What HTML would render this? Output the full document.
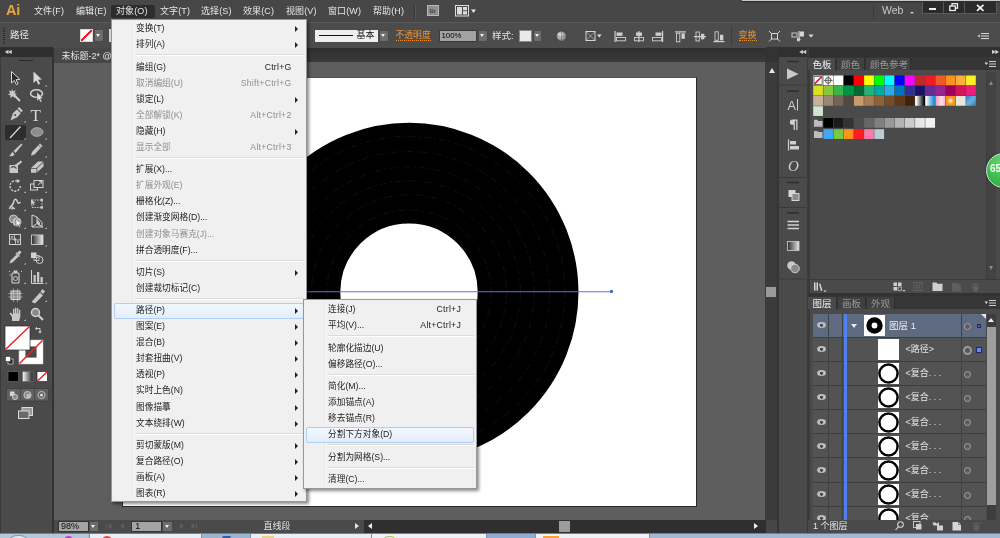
<!DOCTYPE html>
<html lang="zh-CN">
<head>
<meta charset="utf-8">
<title>Adobe Illustrator</title>
<style>
*{box-sizing:border-box;margin:0;padding:0}
html,body{width:1000px;height:538px;overflow:hidden;background:#4a4a4a}
body{font-family:"Liberation Sans","Noto Sans CJK SC",sans-serif;font-size:9px;color:#dcdcdc;line-height:1}
#app{position:absolute;left:0;top:0;width:1000px;height:538px;overflow:hidden;background:#4a4a4a;filter:blur(0.4px)}
.abs,#app div,#app span,#app svg,#app i{position:absolute;display:block}
#app span.t{white-space:nowrap}
/* menubar */
#menubar{left:0;top:0;width:1000px;height:22px;background:#474747}
#menubar .mi{top:6.500px;font-size:9px;color:#e6e6e6;white-space:nowrap;letter-spacing:0.1px}
#ctrl{left:0;top:22px;width:1000px;height:26px;background:#4c4c4c;border-top:1px solid #5a5a5a}
/* menus */
.menu{background:#f0f0f0;border:1px solid #979797;box-shadow:2px 2px 3px rgba(0,0,0,.45)}
.menu .it{left:0;width:100%;height:16px;font-size:8.7px;color:#1c1c1c}
.menu .it .l{left:24px;top:3px;white-space:nowrap}
.menu .it .r{right:14.500px;top:3px;white-space:nowrap;letter-spacing:0.250px}
.menu .it.dis{color:#8e8e8e}
.menu .it .ar{right:8px;top:5px;width:0;height:0;border-left:3px solid #222;border-top:3px solid transparent;border-bottom:3px solid transparent}
.menu .sep{left:24px;right:2px;height:1px;background:#dcdcdc;border-bottom:1px solid #fff;height:2px}
.menu .gut{left:20px;top:1px;bottom:1px;background:#e8e8e8;border-right:1px solid #f8f8f8;width:2px}
.menu .hl{left:2px;right:2px;height:16px;border:1px solid #aecff7;border-radius:2px;background:linear-gradient(#f2f7fd,#e3eefb)}

.ptab{top:1px;height:12px;background:#404040;border-right:1px solid #2e2e2e}
.ptab.act{background:#4a4a4a;height:13px}
.ptab .t{left:4.5px;top:2px;font-size:9.5px;color:#999}
.ptab.act .t{color:#f0f0f0}
.lrow{left:0;width:173px;height:24.15px;border-bottom:1px solid #3e3e3e;font-size:9.5px;color:#e6e6e6}
.lrow.sel{background:#5d6a80}
.lrow .th{top:1.5px;width:21px;height:21px;background:#fff}
.lrow .eye{left:3.500px;top:8.500px;width:9px;height:6px;border-radius:50%;background:radial-gradient(circle at 50% 55%,#484848 0 1.200px,#bcbcbc 1.700px)}
.lrow .tri{left:37.500px;top:10.5px;border-left:3px solid transparent;border-right:3px solid transparent;border-top:4.5px solid #ececec}
.lrow .tg{left:151px;top:9px;width:7px;height:7px;border:1.300px solid #a4a4a4;border-radius:50%;background:#5c5c5c}
.lrow .tg.on{left:150px;top:8px;width:9px;height:9px;border:2.5px solid #9a9a9a;background:#555}
.lrow .sq{left:163px;top:9.5px;width:5.5px;height:5.5px;background:#5b8eff;border:1px solid #1c2a60}
.lrow.sel .sq{left:163.500px;top:10px;width:4.800px;height:4.800px;background:#3d63d6}
.lrow .cn{right:0;top:0;border-left:5px solid transparent;border-top:5px solid #e8e8e8}

.dd{width:9.5px;height:12.5px;background:#6c6c6c;border:1px solid #484848;border-radius:1px}
.dd::after{content:"";position:absolute;left:calc(50% - 2.5px);top:calc(50% - 1.5px);border-left:2.500px solid transparent;border-right:2.500px solid transparent;border-top:3px solid #f0f0f0}
</style>
</head>
<body>
<div id="app">

<!-- ============ DOCUMENT AREA ============ -->
<div id="docarea" style="left:52px;top:47px;width:730px;height:486px;background:#5e5e5e">
  <div style="left:0;top:0;width:730px;height:15px;background:linear-gradient(#2e2e2e,#3a3a3a)"></div>
  <div id="tab" style="left:2px;top:0.500px;width:120px;height:15px;background:#474747"><span class="t" style="left:7.500px;top:4.500px;font-size:9px;color:#e4e4e4">未标题-2* @ 98% (RGB/预览)</span></div>
  <div style="left:0;top:0;width:2px;height:486px;background:#333"></div>
</div>
<!-- artboard -->
<div id="artboard" style="left:122px;top:76.800px;width:575px;height:430.700px;background:#fff;border:1px solid #2a2a2a;border-top-color:#555"></div>
<svg id="art" style="left:122px;top:77px" width="575" height="431" viewBox="122 77 575 431">
  <circle cx="409" cy="292.2" r="119.075" fill="none" stroke="#000" stroke-width="100.75"/>
  <g fill="none" stroke="#1b1b1b" stroke-width="0.6" stroke-dasharray="7 3 2 3"><circle cx="409" cy="292.2" r="156"/><circle cx="409" cy="292.2" r="140.700"/><circle cx="409" cy="292.2" r="125.300"/><circle cx="409" cy="292.2" r="111.400"/><circle cx="409" cy="292.2" r="97.500"/><circle cx="409" cy="292.2" r="82.200"/></g>
  <path d="M300 291.750H611" stroke="#557ad0" stroke-width="1"/>
</svg>

<div style="left:609.800px;top:290px;width:3.400px;height:3.400px;background:#3f62c8;border-radius:1px"></div>

<!-- ============ MENUBAR ============ -->
<div id="menubar">
  <span class="t" style="left:6px;top:3px;font-size:14.500px;font-weight:bold;color:#e8a53c;letter-spacing:-0.300px">Ai</span>
  <div style="left:110.500px;top:4.800px;width:44px;height:13.500px;background:#2d2d2d;border-radius:2px"></div>
  <span class="mi" style="left:34px">文件(F)</span>
  <span class="mi" style="left:76px">编辑(E)</span>
  <span class="mi" style="left:116px">对象(O)</span>
  <span class="mi" style="left:160px">文字(T)</span>
  <span class="mi" style="left:201px">选择(S)</span>
  <span class="mi" style="left:243px">效果(C)</span>
  <span class="mi" style="left:286px">视图(V)</span>
  <span class="mi" style="left:328px">窗口(W)</span>
  <span class="mi" style="left:373px">帮助(H)</span>
  <div style="left:414px;top:4px;width:1px;height:15px;background:#3a3a3a;border-right:1px solid #555;width:2px"></div>
  <div style="left:427px;top:5px;width:12px;height:11px;background:#8f8f8f;border:1px solid #b8b8b8"><span class="t" style="left:1.5px;top:2px;font-size:6px;font-weight:bold;color:#4a4a4a">Br</span></div>
  <svg style="left:455px;top:5px" width="24" height="12" viewBox="0 0 24 12"><rect x="0.5" y="0.5" width="13" height="10.500" fill="none" stroke="#dcdcdc"/><rect x="2" y="2" width="5" height="7.500" fill="#dcdcdc"/><rect x="8" y="2" width="4" height="3.300" fill="#dcdcdc"/><rect x="8" y="6.200" width="4" height="3.300" fill="#dcdcdc"/><path d="M16 4.500h5l-2.500 3.500z" fill="#e6e6e6"/></svg>
  <!-- top-right strip from another window -->
  <div style="left:742px;top:-0.500px;width:258px;height:1.500px;background:#c8c8c8;box-shadow:0 1px 1.500px rgba(0,0,0,.5)"></div>
  <div style="left:873px;top:5px;width:1px;height:15px;background:#3c3c3c"></div>
  <span class="t" style="left:882px;top:5px;font-size:10.500px;color:#c6c6c6">Web</span>
  <i style="left:909.500px;top:12px;border-left:2px solid transparent;border-right:2px solid transparent;border-top:2.500px solid #d0d0d0"></i>
  <div style="left:922px;top:1.500px;width:75px;height:12px;background:#2b2b2b;border:1px solid #5c5c5c;border-top:none;border-radius:0 0 2px 2px"></div>
  <div style="left:943px;top:1.500px;width:1px;height:11.500px;background:#555"></div>
  <div style="left:964px;top:1.500px;width:1px;height:11.500px;background:#555"></div>
  <div style="left:929px;top:8px;width:7px;height:2px;background:#f0f0f0"></div>
  <svg style="left:949px;top:3px" width="10" height="9" viewBox="0 0 10 9"><rect x="3" y="0.700" width="5.500" height="4.500" fill="none" stroke="#f0f0f0" stroke-width="1.300"/><rect x="0.800" y="3" width="5.500" height="4.500" fill="#2b2b2b" stroke="#f0f0f0" stroke-width="1.300"/></svg>
  <svg style="left:976px;top:3.500px" width="9" height="8" viewBox="0 0 9 8"><path d="M1 0.800l6.500 6M7.500 0.800l-6.500 6" stroke="#f4f4f4" stroke-width="1.700"/></svg>
</div>

<!-- ============ CONTROL BAR ============ -->
<div id="ctrl">
  <div style="left:3px;top:4px;width:2px;height:17px;background:repeating-linear-gradient(#2e2e2e 0 1px,#4c4c4c 1px 2px)"></div>
  <span class="t" style="left:10px;top:7px;font-size:9.500px;color:#e6e6e6">路径</span>
  <div style="left:80px;top:6px;width:12.500px;height:13px;background:linear-gradient(135deg,#fff 44%,#e8202a 45%,#e8202a 56%,#fff 57%);border:1px solid #d8d8d8"></div>
  <div class="dd" style="left:94px;top:6px"></div>
  <div style="left:109.300px;top:6px;width:3px;height:13px;background:#d8d8d8"></div>
  <!-- stroke style -->
  <div style="left:314.500px;top:6.500px;width:63.500px;height:12px;background:#efefef"><div style="left:4px;top:5.200px;width:34px;height:1.700px;background:#111"></div><span class="t" style="left:42px;top:1.500px;font-size:9px;color:#111">基本</span></div>
  <div class="dd" style="left:379px;top:6.500px"></div>
  <span class="t" style="left:395.500px;top:7.500px;font-size:8.800px;color:#f09432;border-bottom:1px dotted #f09432;padding-bottom:0.500px">不透明度</span>
  <div style="left:438.500px;top:6.500px;width:38.500px;height:12px;background:#a2a2a2;border:1px solid #3a3a3a"><span class="t" style="left:2px;top:1.500px;font-size:7.800px;color:#000">100%</span></div>
  <div class="dd" style="left:478px;top:6.500px"></div>
  <span class="t" style="left:492px;top:7.500px;font-size:9.500px;color:#e2e2e2">样式:</span>
  <div style="left:518.500px;top:6.500px;width:13px;height:12px;background:#e9e9e9;border:1px solid #8a8a8a"></div>
  <div class="dd" style="left:532.500px;top:6.500px"></div>
  <svg id="cicons" style="left:550px;top:0" width="450" height="25" viewBox="550 22 450 25">
    <defs><radialGradient id="gl" cx="0.4" cy="0.4"><stop offset="0" stop-color="#f4f4f4"/><stop offset="1" stop-color="#7c7c7c"/></radialGradient></defs>
    <circle cx="561.500" cy="35.200" r="5.300" fill="url(#gl)" stroke="#3a3a3a" stroke-width="0.800"/><path d="M561.500 30v10.500M556.300 35.200h10.400" stroke="#6a6a6a" stroke-width="0.500"/>
    <g fill="none" stroke="#d4d4d4" stroke-width="1"><rect x="586" y="30.500" width="9" height="9"/><path d="M586 30.500l9 9M595 30.500l-9 9" stroke-width="0.600"/></g><path d="M597 33.500h4.500l-2.250 3z" fill="#e0e0e0"/>
    <g fill="#cfcfcf" stroke="none">
      <rect x="614.500" y="30" width="1.200" height="11"/><rect x="616.500" y="31.500" width="6" height="3.300"/><rect x="616.500" y="36.500" width="9" height="3.300" fill="none" stroke="#cfcfcf" stroke-width="0.900"/>
      <rect x="638.300" y="30" width="1.200" height="11"/><rect x="636" y="31.500" width="6" height="3.300"/><rect x="634.500" y="36.500" width="9" height="3.300" fill="none" stroke="#cfcfcf" stroke-width="0.900"/>
      <rect x="662" y="30" width="1.200" height="11"/><rect x="655.500" y="31.500" width="6" height="3.300"/><rect x="652.500" y="36.500" width="9" height="3.300" fill="none" stroke="#cfcfcf" stroke-width="0.900"/>
      <rect x="675" y="30.300" width="11" height="1.200"/><rect x="676.500" y="32.300" width="3.300" height="8.500" fill="none" stroke="#cfcfcf" stroke-width="0.900"/><rect x="681.500" y="32.300" width="3.300" height="5.500"/>
      <rect x="694" y="35" width="12" height="1.200"/><rect x="696" y="31" width="3.300" height="9" fill="none" stroke="#cfcfcf" stroke-width="0.900"/><rect x="701" y="32.800" width="3.300" height="5.500"/>
      <rect x="713.500" y="40" width="11" height="1.200"/><rect x="715" y="30.800" width="3.300" height="8.500" fill="none" stroke="#cfcfcf" stroke-width="0.900"/><rect x="720" y="33.800" width="3.300" height="5.500"/>
    </g>
    <path d="M731.500 25v20" stroke="#3e3e3e" stroke-width="1"/>
    <g fill="none" stroke="#d6d6d6" stroke-width="1"><rect x="771.500" y="32.500" width="6" height="5.500"/><path d="M769 30l2.500 2.500M780 30l-2.500 2.500M769 40.500l2.500-2.500M780 40.500l-2.500-2.500"/></g>
    <g fill="#d6d6d6"><rect x="792" y="32" width="5" height="4" fill="none" stroke="#d6d6d6" stroke-width="0.900"/><rect x="798.500" y="30" width="1.200" height="10.500"/><path d="M800 30.500h4v5h-4zM797 36.500l4 2-4 2z"/><path d="M808.500 33.500h5l-2.500 3.300z"/></g>
    <g fill="#cfcfcf"><path d="M977.500 35l2.300-1.800v3.600z"/><rect x="981" y="32" width="8" height="1.100"/><rect x="981" y="34.500" width="8" height="1.100"/><rect x="981" y="37" width="8" height="1.100"/></g>
  </svg>
  <span class="t" style="left:738.500px;top:7.500px;font-size:9px;color:#f09432;border-bottom:1px dotted #f09432;padding-bottom:0.500px">变换</span>
</div>

<!-- ============ TOOLS PANEL ============ -->
<div id="tools" style="left:0;top:47px;width:52px;height:486px;background:#4a4a4a;border-left:1px solid #3a3a3a">
  <div style="left:-1px;top:0;width:53px;height:10px;background:#2f2f2f"></div>
  <span class="t" style="left:3.500px;top:2.500px;font-size:4.500px;color:#cfcfcf;letter-spacing:-1.200px">◀◀</span>
  <div style="left:18px;top:12.500px;width:14px;height:1.600px;background:#2c2c2c"></div>
  <div style="left:4px;top:77.500px;width:21px;height:15.500px;background:#2d2d2d;border-radius:1px"></div>
</div>
<svg id="toolicons" style="left:0;top:57px" width="52" height="380" viewBox="0 57 52 380">
  <g fill="#c8c8c8" stroke="none">
    <!-- row1 selection / direct -->
    <path d="M11.500 71.500l0 11.500 2.800-2.600 2 4.300 1.800-0.900-2-4.100 3.700-0.300z" fill="#2a2a2a" stroke="#d8d8d8" stroke-width="1"/>
    <path d="M33.500 71.500l0 11.500 2.800-2.600 2 4.300 1.800-0.900-2-4.100 3.700-0.300z" fill="#d8d8d8"/>
    <!-- row2 wand / lasso -->
    <path d="M13.500 94.500l6.500 6.500" stroke="#d2d2d2" stroke-width="1.800"/><path d="M12 88.500l1 2.800 2.800-1-1.300 2.600 2.600 1.400-2.800 0.800 0.500 3-2.300-1.800-2.200 2 0.300-3-2.900-0.500 2.500-1.600-1.400-2.600 2.900 0.700z"/>
    <ellipse cx="36.500" cy="93.500" rx="6" ry="3.800" fill="none" stroke="#d2d2d2" stroke-width="1.500"/><path d="M37 92l0 9 2-1.800 1.500 3 1.400-0.700-1.500-2.900 2.600-0.200z" fill="#e0e0e0" stroke="#4a4a4a" stroke-width="0.400"/>
    <!-- row3 pen / type -->
    <path d="M10.500 120.500l2.500-7.500 4-3.500 3.800 3.800-3.600 3.900z M17.500 108.500l1.700-1.600 3.700 3.800-1.600 1.600z"/><circle cx="15.200" cy="115" r="1.100" fill="#4a4a4a"/>
    <text x="30.500" y="120.500" font-family="Liberation Serif,serif" font-size="17" fill="#d6d6d6">T</text>
    <!-- row4 line / ellipse -->
    <path d="M10 138l10.500-11.500" stroke="#dadada" stroke-width="1.200"/>
    <ellipse cx="37" cy="132" rx="6" ry="4.300" fill="#8c8c8c" stroke="#bcbcbc" stroke-width="0.800"/>
    <!-- row5 brush / pencil -->
    <path d="M21.500 143.500l1 1-7 8.500-2-2z M12.500 152l2.200 2.200c-1.500 2.300-4 2.500-5.700 1.800 1.800-0.600 1.700-2.800 3.500-4z"/>
    <path d="M40 143.500l2.500 2.500-8 8.500-3.500 1.200 1-3.700z" /><path d="M38.500 145l2.500 2.500" stroke="#4a4a4a" stroke-width="0.700"/>
    <!-- row6 blob / eraser -->
    <path d="M9.500 165h8.500v8h-8.500z M14 165.500l7-5 1.200 1.500-6.500 5.500z"/><path d="M11 167.500c2-1.500 4-1 5.500 1" stroke="#4a4a4a" stroke-width="1.200" fill="none"/>
    <path d="M31 168l7-6.500 5.500 0-7 6.500z M31 168.700h5.500v4h-5.500z M37.300 168.300l6.200-5.800v4l-6.200 5.800z"/>
    <!-- row7 rotate / scale -->
    <path d="M20.300 186a5.200 5.200 0 1 1-2.500-4.400" fill="none" stroke="#d2d2d2" stroke-width="1.300" stroke-dasharray="2.200 1.200"/><path d="M16.500 179l3.800 1.800-3 2.500z"/>
    <rect x="30.500" y="184" width="7" height="6" fill="none" stroke="#d2d2d2" stroke-width="1"/><rect x="34" y="180.500" width="9" height="7" fill="#4a4a4a" stroke="#d2d2d2" stroke-width="1"/><path d="M38 185l3.500-3.200M41.700 181.500v2.500M41.700 181.500h-2.500" stroke="#d2d2d2" stroke-width="0.900" fill="none"/>
    <!-- row8 width / free transform -->
    <path d="M9.500 209c1-5 3-2.500 4-6.500s2.500-4 3.500-1.500 1.500 3 3.500 1" fill="none" stroke="#d2d2d2" stroke-width="1.500"/><path d="M12 205.500l3.500 3.500-4.500 0.500z"/>
    <rect x="32" y="200" width="10" height="7.500" fill="none" stroke="#d2d2d2" stroke-width="0.900" stroke-dasharray="1.600 1"/><path d="M31 199l0 6 1.600-1.400 1 2 1-0.500-1-2 1.900-0.200z"/><rect x="40.500" y="198.700" width="2.500" height="2.500"/><rect x="40.500" y="206.200" width="2.500" height="2.500"/>
    <!-- row9 shape builder / perspective -->
    <circle cx="13.500" cy="219" r="4" fill="#8a8a8a" stroke="#d2d2d2" stroke-width="0.900"/><circle cx="17" cy="222" r="4" fill="#b0b0b0" stroke="#d2d2d2" stroke-width="0.900"/><path d="M16 218.500l0 8 2-1.800 1.400 2.800 1.200-0.600-1.400-2.700 2.500-0.200z" fill="#f0f0f0" stroke="#333" stroke-width="0.400"/>
    <path d="M32 215v12h11M32 227l5-3.500v-6.500l-5-2M37 223.500l6 3.500M37 217l5 5.500v4" fill="none" stroke="#d2d2d2" stroke-width="1"/><path d="M37 219.500l3 3v3.500l-3-2z"/>
    <!-- row10 mesh / gradient -->
    <rect x="9.500" y="234.500" width="11" height="10" fill="none" stroke="#d2d2d2" stroke-width="1"/><path d="M9.500 239.500c3-2 7 2 11 0M15 234.500c-2 3 2 7 0 10" fill="none" stroke="#d2d2d2" stroke-width="0.900"/><circle cx="15" cy="239.500" r="1.300"/><circle cx="12" cy="237" r="0.900"/><circle cx="18" cy="242" r="0.900"/>
    <defs><linearGradient id="tg1"><stop offset="0" stop-color="#2a2a2a"/><stop offset="1" stop-color="#ededed"/></linearGradient></defs>
    <rect x="31.500" y="235" width="11.500" height="9.500" fill="url(#tg1)" stroke="#cfcfcf" stroke-width="0.900"/>
    <!-- row11 eyedropper / blend -->
    <path d="M9.500 263.500l1-3 6-6 2 2-6 6z M17 253l2-2c1-1 3 1 2 2l-2 2z" /><path d="M16 253l3.500 3.500" stroke="#d2d2d2" stroke-width="1.300"/>
    <rect x="31" y="252.500" width="5.500" height="5.500" fill="#d2d2d2"/><circle cx="39.500" cy="260" r="3.500" fill="none" stroke="#d2d2d2" stroke-width="1"/><rect x="34" y="255.500" width="5" height="5" fill="none" stroke="#d2d2d2" stroke-width="0.800"/>
    <!-- row12 symbol sprayer / graph -->
    <rect x="12" y="273" width="7" height="10" rx="1" fill="none" stroke="#d2d2d2" stroke-width="1.100"/><rect x="13.500" y="270.500" width="4" height="2.500"/><circle cx="15.500" cy="278.500" r="2" fill="none" stroke="#d2d2d2" stroke-width="0.900"/><path d="M9 271.500h1M9.500 275h1M21 271.500h1" stroke="#d2d2d2" stroke-width="1"/>
    <path d="M31.500 270v13.500h12" fill="none" stroke="#d2d2d2" stroke-width="1"/><rect x="33.500" y="275" width="2.300" height="7.500"/><rect x="37" y="272" width="2.300" height="10.500"/><rect x="40.500" y="277" width="2.300" height="5.500"/>
    <!-- row13 artboard / slice -->
    <rect x="11" y="291" width="9" height="8.500" fill="#8a8a8a" stroke="#d2d2d2" stroke-width="1"/><path d="M8.500 293.500h14M8.500 297h14M13.500 288.500v13.500M17.500 288.500v13.500" stroke="#d2d2d2" stroke-width="0.600"/>
    <path d="M31.500 302l8.500-9.500 3 3-8 8z M40.500 291.500l2-2.500 2.500 2.500-2 2.500z"/>
    <!-- row14 hand / zoom -->
    <path d="M12 321v-4l-2.500-3.500 1.300-1 2.200 2.200v-6h1.400v4.500h0.600v-5.500h1.400v5.500h0.600v-5h1.400v5.300h0.600v-3.800h1.300v7.500l-1.300 3.800z"/>
    <circle cx="35.500" cy="312.500" r="4" fill="#8a8a8a" stroke="#d2d2d2" stroke-width="1.400"/><path d="M38.500 315.500l4.500 4.500" stroke="#d2d2d2" stroke-width="2"/>
  </g>
  <!-- little corner triangles -->
  <g fill="#d8d8d8"><path d="M45 86.500l1.700-1.700v1.700zM24 122.500l1.700-1.700v1.700zM45 122.500l1.700-1.700v1.700zM24 139.500l1.700-1.700v1.700zM45 139.500l1.700-1.700v1.700zM45 157.500l1.700-1.700v1.700zM45 174.500l1.700-1.700v1.700zM24 193l1.700-1.700v1.700zM45 193l1.700-1.700v1.700zM24 211l1.700-1.700v1.700zM24 229l1.700-1.700v1.700zM45 229l1.700-1.700v1.700zM45 246.500l1.700-1.700v1.700zM24 264.500l1.700-1.700v1.700zM24 284l1.700-1.700v1.700zM45 284l1.700-1.700v1.700zM45 302l1.700-1.700v1.700zM24 321l1.700-1.700v1.700z"/></g>
  <!-- fill / stroke -->
  <rect x="19" y="340" width="24" height="24" fill="#fff" stroke="#d0d0d0" stroke-width="0.500"/><rect x="25.500" y="346.500" width="11" height="11" fill="#4a4a4a" stroke="#888" stroke-width="0.500"/><path d="M19.500 363.500l23-23" stroke="#e8202a" stroke-width="1.500"/>
  <rect x="5" y="326" width="25" height="24" fill="#fff" stroke="#2a2a2a" stroke-width="0.700"/><path d="M5.500 349.500l24-23" stroke="#e8202a" stroke-width="1.500"/>
  <path d="M36.500 328.500h3.500v3.500" fill="none" stroke="#d2d2d2" stroke-width="1"/><path d="M35 328.500l2-1.800v3.600zM40 333.500l-1.800-2h3.600z" fill="#d2d2d2"/>
  <rect x="8" y="359" width="5" height="5" fill="#222" stroke="#ddd" stroke-width="0.700"/><rect x="5.500" y="356.500" width="5" height="5" fill="#fff" stroke="#222" stroke-width="0.500"/>
  <!-- color / gradient / none -->
  <rect x="8" y="371.500" width="10.500" height="10" fill="#000" stroke="#6a6a6a" stroke-width="0.700"/>
  <defs><linearGradient id="tg2"><stop offset="0" stop-color="#fff"/><stop offset="1" stop-color="#222"/></linearGradient></defs>
  <rect x="22.500" y="371.500" width="10.500" height="10" fill="url(#tg2)" stroke="#6a6a6a" stroke-width="0.700"/>
  <rect x="37" y="371.500" width="10.500" height="10" fill="#fff" stroke="#2a2a2a" stroke-width="0.700"/><path d="M37.500 381l9.500-9" stroke="#e8202a" stroke-width="1.500"/>
  <!-- draw modes -->
  <rect x="6.500" y="388.500" width="42" height="12.500" rx="1.500" fill="#616161" stroke="#3c3c3c" stroke-width="0.800"/>
  <path d="M20.500 389v12M34.500 389v12" stroke="#444" stroke-width="0.800"/>
  <g fill="#d6d6d6"><rect x="10" y="391.500" width="4.500" height="4.500"/><circle cx="15" cy="397" r="2.600" fill="#8a8a8a" stroke="#d6d6d6" stroke-width="0.800"/>
  <circle cx="27.500" cy="395" r="3.600" fill="#8a8a8a" stroke="#d6d6d6" stroke-width="0.800"/><rect x="26.500" y="394" width="4" height="4" fill="#bdbdbd"/>
  <circle cx="41.500" cy="395" r="3.600" fill="none" stroke="#d6d6d6" stroke-width="0.800"/><circle cx="41.500" cy="395" r="1.600"/></g>
  <!-- screen mode -->
  <rect x="22" y="407.500" width="10.500" height="8" fill="#9a9a9a" stroke="#dcdcdc" stroke-width="1"/><rect x="18.500" y="411" width="10.500" height="7.500" fill="#6a6a6a" stroke="#dcdcdc" stroke-width="1"/>
</svg>

<!-- ============ RIGHT DOCK ============ -->
<div id="right" style="left:766px;top:47px;width:234px;height:486px;background:#4a4a4a">
  <!-- vertical scrollbar of doc -->
  <div style="left:-1px;top:15px;width:13.500px;height:471px;background:#3b3b3b"></div><div style="left:10.500px;top:15px;width:2.500px;height:471px;background:#353535"></div><div style="left:-1px;top:473.300px;width:11.500px;height:12.500px;background:#464646"></div>
  <div style="left:0;top:0;width:12.5px;height:15px;background:#333"></div>
  <i style="left:3px;top:21px;border-left:3.5px solid transparent;border-right:3.5px solid transparent;border-bottom:5px solid #e8e8e8"></i>
  <div style="left:-0.500px;top:239.500px;width:10.800px;height:10.500px;background:#9a9a9a"></div>
  <!-- dock column -->
  <div style="left:12.5px;top:0;width:28px;height:10px;background:#303030"></div>
  <div style="left:40.5px;top:0;width:2px;height:486px;background:#3a3a3a"></div>
  <span class="t" style="left:33px;top:2.500px;font-size:4.500px;color:#cfcfcf;letter-spacing:-1.200px">◀◀</span>
  <div style="left:12.5px;top:10px;width:28px;height:476px;background:#4a4a4a"></div>
  <!-- panel group header -->
  <div style="left:42.5px;top:0;width:191.5px;height:10px;background:#303030"></div>
  <span class="t" style="left:225.500px;top:2.500px;font-size:4.500px;color:#cfcfcf;letter-spacing:-1.200px">▶▶</span>
</div>

<div style="left:776.500px;top:520px;width:2.500px;height:13px;background:#353535"></div>
<!-- dock icons -->
<svg id="dock" style="left:778px;top:57px" width="28" height="225" viewBox="778 57 28 225">
  <g stroke="#2e2e2e" stroke-width="1.6"><path d="M787 61.5h12M787 91h12M787 182.5h12M787 213h12"/></g>
  <g stroke="#3a3a3a" stroke-width="1"><path d="M779 85h27M779 177.5h27M779 207.500h27M779 279h27"/></g>
  <path d="M787 68.500l11.500 5.500-11.500 5.500z" fill="#c9c9c9"/>
  <text x="787.500" y="109.500" font-family="Liberation Sans,sans-serif" font-size="12.500" fill="#d0d0d0">A</text><path d="M797.500 99v11.500" stroke="#d0d0d0" stroke-width="1"/>
  <path d="M792.500 119.500h5v10.500h-1.300v-9.300h-1.300v9.300h-1.300v-5.200h-1.100a2.650 2.650 0 0 1 0-5.300z" fill="#cfcfcf"/>
  <path d="M788.500 139.500v11" stroke="#cfcfcf" stroke-width="1.200"/><rect x="790" y="141" width="6" height="3.500" fill="#cfcfcf"/><rect x="790" y="146" width="9" height="3.500" fill="#cfcfcf"/>
  <text x="788" y="171" font-family="Liberation Serif,serif" font-style="italic" font-size="15" fill="#d0d0d0">O</text>
  <rect x="788.500" y="190" width="7" height="7" fill="#d6d6d6"/><rect x="792" y="193.500" width="7" height="7" fill="#8c8c8c" stroke="#d6d6d6" stroke-width="1"/>
  <path d="M787.500 221.500h11.500M787.500 225h11.500M787.500 228.500h11.500" stroke="#d2d2d2" stroke-width="1.400"/>
  <defs><linearGradient id="dg"><stop offset="0" stop-color="#2c2c2c"/><stop offset="1" stop-color="#e6e6e6"/></linearGradient></defs>
  <rect x="787.500" y="241.500" width="11.500" height="9" fill="url(#dg)" stroke="#cfcfcf" stroke-width="0.800"/>
  <circle cx="791.500" cy="265.500" r="4.300" fill="#c8c8c8"/><circle cx="795" cy="268.500" r="4.300" fill="#8a8a8a" stroke="#d8d8d8" stroke-width="0.900"/>
</svg>

<!-- swatches panel -->
<div id="swp" style="left:808px;top:57px;width:192px;height:239px;background:#4a4a4a">
  <div style="left:0;top:0;width:192px;height:13px;background:#363636"></div>
  <div class="ptab act" style="left:0;width:28px"><span class="t">色板</span></div>
  <div class="ptab" style="left:28.5px;width:28.5px"><span class="t">颜色</span></div>
  <div class="ptab" style="left:57.5px;width:45px"><span class="t">颜色参考</span></div>
  <svg style="left:176px;top:3px" width="13" height="8" viewBox="0 0 13 8"><path d="M0.500 2.500h3.600l-1.800 2.400z" fill="#d8d8d8"/><path d="M5 1.500h7M5 4h7M5 6.500h7" stroke="#d0d0d0" stroke-width="1.100"/></svg>
  <div style="left:178px;top:15px;width:10px;height:207px;background:#434343;border-left:1px solid #3c3c3c"></div>
  <i style="left:180.5px;top:24px;border-left:2.5px solid transparent;border-right:2.5px solid transparent;border-bottom:4px solid #8a8a8a"></i>
  <i style="left:180.5px;top:209px;border-left:2.5px solid transparent;border-right:2.5px solid transparent;border-top:4px solid #8a8a8a"></i>
  <div style="left:0;top:222px;width:192px;height:1px;background:#3a3a3a"></div>
  <div style="left:0;top:13px;width:1.500px;height:223px;background:#3a3a3a"></div>
  <div style="left:0;top:236px;width:192px;height:3px;background:#333"></div>
</div>
<svg id="swatches" style="left:808px;top:70px" width="180" height="75" viewBox="808 70 180 75">
<defs><linearGradient id="sg1"><stop offset="0.1" stop-color="#fff"/><stop offset="0.95" stop-color="#000"/></linearGradient>
<linearGradient id="sg2"><stop offset="0.05" stop-color="#fff"/><stop offset="0.9" stop-color="#1b8fd6"/></linearGradient>
<linearGradient id="sg3"><stop offset="0" stop-color="#f59ab8"/><stop offset="0.6" stop-color="#fde0ea"/><stop offset="1" stop-color="#f8b4cb"/></linearGradient>
<radialGradient id="sg4"><stop offset="0.1" stop-color="#fff0c0"/><stop offset="0.7" stop-color="#f7931e"/></radialGradient>
<linearGradient id="sg5" x2="1" y2="1"><stop offset="0" stop-color="#2f7fc4"/><stop offset="0.5" stop-color="#6fb0e0"/><stop offset="1" stop-color="#2f7fc4"/></linearGradient></defs>
<rect x="813.20" y="75.50" width="9.74" height="9.75" fill="#fff"/><rect x="814.00" y="76.30" width="8.14" height="8.15" fill="none" stroke="#333" stroke-width="0.7"/><path d="M814.50 83.95L821.64 76.80" stroke="#e8202a" stroke-width="1.7"/>
<rect x="823.39" y="75.50" width="9.74" height="9.75" fill="#fff"/><circle cx="828.26" cy="80.38" r="2.8" fill="none" stroke="#444" stroke-width="0.9"/><path d="M828.26 76.00V84.75M823.89 80.38H832.63" stroke="#444" stroke-width="0.8"/>
<rect x="833.58" y="75.50" width="9.74" height="9.75" fill="#ffffff"/>
<rect x="843.77" y="75.50" width="9.74" height="9.75" fill="#000000"/>
<rect x="853.96" y="75.50" width="9.74" height="9.75" fill="#ff0000"/>
<rect x="864.15" y="75.50" width="9.74" height="9.75" fill="#ffff00"/>
<rect x="874.34" y="75.50" width="9.74" height="9.75" fill="#00ff00"/>
<rect x="884.53" y="75.50" width="9.74" height="9.75" fill="#00ffff"/>
<rect x="894.72" y="75.50" width="9.74" height="9.75" fill="#0000ff"/>
<rect x="904.91" y="75.50" width="9.74" height="9.75" fill="#ff00ff"/>
<rect x="915.10" y="75.50" width="9.74" height="9.75" fill="#c1272d"/>
<rect x="925.29" y="75.50" width="9.74" height="9.75" fill="#ed1c24"/>
<rect x="935.48" y="75.50" width="9.74" height="9.75" fill="#f15a24"/>
<rect x="945.67" y="75.50" width="9.74" height="9.75" fill="#f7931e"/>
<rect x="955.86" y="75.50" width="9.74" height="9.75" fill="#fbb03b"/>
<rect x="966.05" y="75.50" width="9.74" height="9.75" fill="#fcee21"/>
<rect x="813.20" y="85.80" width="9.74" height="9.75" fill="#d9e021"/>
<rect x="823.39" y="85.80" width="9.74" height="9.75" fill="#8cc63f"/>
<rect x="833.58" y="85.80" width="9.74" height="9.75" fill="#39b54a"/>
<rect x="843.77" y="85.80" width="9.74" height="9.75" fill="#009245"/>
<rect x="853.96" y="85.80" width="9.74" height="9.75" fill="#006837"/>
<rect x="864.15" y="85.80" width="9.74" height="9.75" fill="#22b573"/>
<rect x="874.34" y="85.80" width="9.74" height="9.75" fill="#00a99d"/>
<rect x="884.53" y="85.80" width="9.74" height="9.75" fill="#29abe2"/>
<rect x="894.72" y="85.80" width="9.74" height="9.75" fill="#0071bc"/>
<rect x="904.91" y="85.80" width="9.74" height="9.75" fill="#2e3192"/>
<rect x="915.10" y="85.80" width="9.74" height="9.75" fill="#1b1464"/>
<rect x="925.29" y="85.80" width="9.74" height="9.75" fill="#662d91"/>
<rect x="935.48" y="85.80" width="9.74" height="9.75" fill="#93278f"/>
<rect x="945.67" y="85.80" width="9.74" height="9.75" fill="#9e005d"/>
<rect x="955.86" y="85.80" width="9.74" height="9.75" fill="#d4145a"/>
<rect x="966.05" y="85.80" width="9.74" height="9.75" fill="#ed1e79"/>
<rect x="813.20" y="96.00" width="9.74" height="9.75" fill="#c7b299"/>
<rect x="823.39" y="96.00" width="9.74" height="9.75" fill="#998675"/>
<rect x="833.58" y="96.00" width="9.74" height="9.75" fill="#736357"/>
<rect x="843.77" y="96.00" width="9.74" height="9.75" fill="#534741"/>
<rect x="853.96" y="96.00" width="9.74" height="9.75" fill="#c69c6d"/>
<rect x="864.15" y="96.00" width="9.74" height="9.75" fill="#a67c52"/>
<rect x="874.34" y="96.00" width="9.74" height="9.75" fill="#8c6239"/>
<rect x="884.53" y="96.00" width="9.74" height="9.75" fill="#754c24"/>
<rect x="894.72" y="96.00" width="9.74" height="9.75" fill="#603813"/>
<rect x="904.91" y="96.00" width="9.74" height="9.75" fill="#42210b"/>
<rect x="915.10" y="96.00" width="9.74" height="9.75" fill="url(#sg1)"/>
<rect x="925.29" y="96.00" width="9.74" height="9.75" fill="url(#sg2)"/>
<rect x="935.48" y="96.00" width="9.74" height="9.75" fill="url(#sg3)"/>
<rect x="945.67" y="96.00" width="9.74" height="9.75" fill="url(#sg4)"/>
<rect x="955.86" y="96.00" width="9.74" height="9.75" fill="#ebe6da"/>
<rect x="966.05" y="96.00" width="9.74" height="9.75" fill="url(#sg5)"/>
<rect x="813.20" y="106.20" width="9.74" height="9.75" fill="#d2e4d0"/>
<path d="M814.00 119.70h3.3l1 1.2h4.2v5.800h-8.500z" fill="#bdbdbd"/>
<rect x="823.39" y="118.00" width="9.74" height="9.75" fill="#000000"/>
<rect x="833.58" y="118.00" width="9.74" height="9.75" fill="#1a1a1a"/>
<rect x="843.77" y="118.00" width="9.74" height="9.75" fill="#333333"/>
<rect x="853.96" y="118.00" width="9.74" height="9.75" fill="#4d4d4d"/>
<rect x="864.15" y="118.00" width="9.74" height="9.75" fill="#666666"/>
<rect x="874.34" y="118.00" width="9.74" height="9.75" fill="#808080"/>
<rect x="884.53" y="118.00" width="9.74" height="9.75" fill="#999999"/>
<rect x="894.72" y="118.00" width="9.74" height="9.75" fill="#b3b3b3"/>
<rect x="904.91" y="118.00" width="9.74" height="9.75" fill="#cccccc"/>
<rect x="915.10" y="118.00" width="9.74" height="9.75" fill="#e6e6e6"/>
<rect x="925.29" y="118.00" width="9.74" height="9.75" fill="#f2f2f2"/>
<path d="M814.00 130.90h3.3l1 1.2h4.2v5.800h-8.500z" fill="#bdbdbd"/>
<rect x="823.39" y="129.20" width="9.74" height="9.75" fill="#3fa9f5"/>
<rect x="833.58" y="129.20" width="9.74" height="9.75" fill="#7ac943"/>
<rect x="843.77" y="129.20" width="9.74" height="9.75" fill="#ff931e"/>
<rect x="853.96" y="129.20" width="9.74" height="9.75" fill="#ff1d25"/>
<rect x="864.15" y="129.20" width="9.74" height="9.75" fill="#ff7bac"/>
<rect x="874.34" y="129.20" width="9.74" height="9.75" fill="#bdccd4"/>
</svg>

<svg id="swicons" style="left:808px;top:280px" width="192" height="14" viewBox="808 280 192 14">
  <g fill="#d8d8d8"><rect x="814" y="282.500" width="1.500" height="8"/><rect x="816.500" y="282.500" width="1.500" height="8"/><path d="M819 284l1.400-0.400 2 7-1.400 0.400z"/><path d="M823.500 290.500h3l-1.500 1.800z"/></g>
  <g fill="#d0d0d0"><rect x="893.500" y="282.500" width="3.500" height="3.500"/><rect x="898" y="282.500" width="3.500" height="3.500"/><rect x="893.500" y="287" width="3.500" height="3.500"/><rect x="898" y="287" width="3.500" height="3.500" fill="none" stroke="#d0d0d0" stroke-width="0.700"/><path d="M902.500 290h3l-1.500 1.800z"/></g>
  <g fill="none" stroke="#606060" stroke-width="1"><rect x="914" y="282.500" width="8" height="8"/><rect x="916.500" y="285" width="3" height="3"/></g>
  <path d="M932.500 282.500h4l1 1.300h5v7.200h-10z" fill="#cfcfcf"/>
  <g fill="#5e5e5e"><path d="M952 283h6.500l2.500 2.500v6h-9z"/><path d="M971.500 284h8v1.200h-8zM972.500 286h6l-0.600 5.500h-4.800zM974.500 282.800h2v1h-2z"/></g>
</svg>
<!-- green badge -->
<div style="left:986px;top:153px;width:35px;height:35px;border-radius:50%;background:radial-gradient(circle at 50% 25%,#6fd67a 0,#3fbf52 55%,#2fa344 100%);border:1.200px solid #cfe6cf;box-shadow:0 0 2px rgba(0,0,0,.5)"><span class="t" style="left:3px;top:10px;font-size:10px;font-weight:bold;color:#f4fff4">65</span></div>

<!-- layers panel -->
<div id="lyp" style="left:808px;top:296px;width:192px;height:237px;background:#4a4a4a">
  <div style="left:0;top:0;width:192px;height:13px;background:#363636"></div>
  <div class="ptab act" style="left:0;width:29px"><span class="t">图层</span></div>
  <div class="ptab" style="left:29.5px;width:28.5px"><span class="t">画板</span></div>
  <div class="ptab" style="left:58.5px;width:28.5px"><span class="t">外观</span></div>
  <svg style="left:176px;top:3px" width="13" height="8" viewBox="0 0 13 8"><path d="M0.500 2.500h3.600l-1.800 2.400z" fill="#d8d8d8"/><path d="M5 1.500h7M5 4h7M5 6.500h7" stroke="#d0d0d0" stroke-width="1.100"/></svg>
  <div style="left:0;top:13px;width:1.500px;height:224px;background:#3a3a3a"></div>
  <div id="llist" style="left:5px;top:17.5px;width:173px;height:206px;background:#535353;overflow:hidden">
<div class="lrow sel" style="top:0.0px"><i class="eye"></i><i class="tri"></i><div class="th" style="left:50.5px"><svg width="21" height="21" viewBox="0 0 21 21"><circle cx="10.5" cy="10.5" r="5.55" fill="none" stroke="#000" stroke-width="5.3"/></svg></div><span class="t" style="left:76px;top:7px;font-size:9.5px;color:#f0f0f0">图层 1</span><i class="tg"></i><i class="sq"></i><i class="cn"></i></div>
<div class="lrow" style="top:24.1px"><i class="eye"></i><div class="th" style="left:65px"></div><span class="t" style="left:92.500px;top:7.500px;font-size:9px">&lt;路径&gt;</span><i class="tg on"></i><i class="sq"></i></div>
<div class="lrow" style="top:48.3px"><i class="eye"></i><div class="th" style="left:65px"><svg width="21" height="21" viewBox="0 0 21 21"><circle cx="10.5" cy="10.5" r="9.1" fill="#fff" stroke="#000" stroke-width="2.500"/></svg></div><span class="t" style="left:92.500px;top:7.500px;font-size:9px">&lt;复合. . .</span><i class="tg"></i></div>
<div class="lrow" style="top:72.4px"><i class="eye"></i><div class="th" style="left:65px"><svg width="21" height="21" viewBox="0 0 21 21"><circle cx="10.5" cy="10.5" r="9.1" fill="#fff" stroke="#000" stroke-width="2.500"/></svg></div><span class="t" style="left:92.500px;top:7.500px;font-size:9px">&lt;复合. . .</span><i class="tg"></i></div>
<div class="lrow" style="top:96.6px"><i class="eye"></i><div class="th" style="left:65px"><svg width="21" height="21" viewBox="0 0 21 21"><circle cx="10.5" cy="10.5" r="9.1" fill="#fff" stroke="#000" stroke-width="2.500"/></svg></div><span class="t" style="left:92.500px;top:7.500px;font-size:9px">&lt;复合. . .</span><i class="tg"></i></div>
<div class="lrow" style="top:120.8px"><i class="eye"></i><div class="th" style="left:65px"><svg width="21" height="21" viewBox="0 0 21 21"><circle cx="10.5" cy="10.5" r="9.1" fill="#fff" stroke="#000" stroke-width="2.500"/></svg></div><span class="t" style="left:92.500px;top:7.500px;font-size:9px">&lt;复合. . .</span><i class="tg"></i></div>
<div class="lrow" style="top:144.9px"><i class="eye"></i><div class="th" style="left:65px"><svg width="21" height="21" viewBox="0 0 21 21"><circle cx="10.5" cy="10.5" r="9.1" fill="#fff" stroke="#000" stroke-width="2.500"/></svg></div><span class="t" style="left:92.500px;top:7.500px;font-size:9px">&lt;复合. . .</span><i class="tg"></i></div>
<div class="lrow" style="top:169.0px"><i class="eye"></i><div class="th" style="left:65px"><svg width="21" height="21" viewBox="0 0 21 21"><circle cx="10.5" cy="10.5" r="9.1" fill="#fff" stroke="#000" stroke-width="2.500"/></svg></div><span class="t" style="left:92.500px;top:7.500px;font-size:9px">&lt;复合. . .</span><i class="tg"></i></div>
<div class="lrow" style="top:193.2px"><i class="eye"></i><div class="th" style="left:65px"><svg width="21" height="21" viewBox="0 0 21 21"><circle cx="10.5" cy="10.5" r="9.1" fill="#fff" stroke="#000" stroke-width="2.500"/></svg></div><span class="t" style="left:92.500px;top:7.500px;font-size:9px">&lt;复合. . .</span><i class="tg"></i></div>
    <div style="left:15px;top:0;width:1px;height:206px;background:#424242"></div>
    <div style="left:29px;top:0;width:1px;height:206px;background:#424242"></div>
    <div style="left:147.5px;top:0;width:1px;height:206px;background:#424242"></div>
    <div style="left:30.800px;top:0;width:3.300px;height:206px;background:#4f80f0"></div>
  </div>
  <div style="left:178.5px;top:17.5px;width:9.5px;height:206px;background:#3d3d3d"></div>
  <div style="left:179px;top:30.500px;width:8.500px;height:178px;background:#9e9e9e"></div>
  <i style="left:180px;top:21.5px;border-left:3px solid transparent;border-right:3px solid transparent;border-bottom:4px solid #ededed"></i>
  <div style="left:0;top:223.5px;width:192px;height:13.5px;background:#4a4a4a"></div>
  <span class="t" style="left:5px;top:226px;font-size:9px;color:#e8e8e8">1 个图层</span>
</div>

<svg id="lyicons" style="left:808px;top:519.500px" width="192" height="13" viewBox="808 519.500 192 13">
  <g fill="none" stroke="#d4d4d4" stroke-width="1.100"><circle cx="900.500" cy="524" r="2.800"/><path d="M898.500 526.200l-3 3.300"/></g>
  <g fill="#d0d0d0"><rect x="913.500" y="521" width="6.500" height="6" fill="none" stroke="#d0d0d0" stroke-width="0.900"/><rect x="916" y="523.500" width="5.500" height="5.500"/></g>
  <g fill="#d0d0d0"><path d="M932.500 522h3.500v1h1.500v-1h1.500v3h4v5h-6v-5h-3.500z"/></g>
  <path d="M952.500 521.500h6l2.500 2.500v6h-8.500z" fill="#d6d6d6"/><path d="M958.500 521.500v2.500h2.500" fill="none" stroke="#4a4a4a" stroke-width="0.600"/>
  <g fill="#5e5e5e"><path d="M972.500 522.500h8v1.200h-8zM973.500 524.500h6l-0.600 5.500h-4.800zM975.500 521.300h2v1h-2z"/></g>
</svg>

<!-- ============ STATUS BAR ============ -->
<div id="status" style="left:52px;top:520.300px;width:714px;height:12.500px;background:#4a4a4a">
  <div style="left:0;top:0;width:2px;height:13px;background:#333"></div>
  <div style="left:6px;top:0.700px;width:30.500px;height:11.300px;background:#a4a4a4;border:1px solid #333"><span class="t" style="left:2px;top:0.500px;font-size:9px;color:#0a0a0a">98%</span></div>
  <div class="dd" style="left:36.700px;top:0.700px;width:10.500px;height:11.300px"></div>
  <svg style="left:50px;top:0" width="100" height="12.500" viewBox="102 520.300 100 12.500"><g fill="#5e5e5e"><rect x="105.500" y="523.500" width="1.200" height="6"/><path d="M111.500 523.500v6l-4-3z"/><path d="M124 523.500v6l-4-3z"/><path d="M180 523.500v6l4-3z"/><path d="M191.500 523.500v6l4-3z"/><rect x="196" y="523.500" width="1.200" height="6"/></g></svg>
  <div style="left:79.200px;top:0.700px;width:30.500px;height:11.300px;background:#a4a4a4;border:1px solid #333"><span class="t" style="left:3px;top:0.500px;font-size:9px;color:#0a0a0a">1</span></div>
  <div class="dd" style="left:110px;top:0.700px;width:10.500px;height:11.300px"></div>
  <span class="t" style="left:211.500px;top:1.500px;font-size:9px;color:#e4e4e4">直线段</span>
  <i style="left:303px;top:3px;border-top:3.300px solid transparent;border-bottom:3.300px solid transparent;border-left:4.500px solid #e6e6e6"></i>
  <div style="left:311.500px;top:0;width:402.500px;height:12.500px;background:#2f2f2f"></div>
  <i style="left:315.500px;top:2.500px;border-top:3.500px solid transparent;border-bottom:3.500px solid transparent;border-right:4.500px solid #f0f0f0"></i>
  <div style="left:506.500px;top:1px;width:11.500px;height:10.500px;background:#9c9c9c"></div>
  <i style="left:702px;top:2.500px;border-top:3.500px solid transparent;border-bottom:3.500px solid transparent;border-left:4.500px solid #f0f0f0"></i>
</div>

<!-- ============ TASKBAR ============ -->
<div id="taskbar" style="left:0;top:532.500px;width:1000px;height:5.500px;background:#a8bbd4;border-top:1px solid #6f8099">
  <div style="left:0;top:0;width:88px;height:5px;background:#b4c7dc"></div>
  <div style="left:9px;top:1px;width:19px;height:10px;border-radius:50%;background:#dfe9f3;border:1px solid #7d96b3"></div>
  <div style="left:64px;top:2px;width:9px;height:8px;border-radius:50%;background:#c23bd6"></div>
  <div style="left:88.500px;top:0;width:113px;height:5px;background:#e9eff6;border-left:1px solid #7f93ad;border-right:1px solid #7f93ad"></div>
  <div style="left:102px;top:2px;width:10px;height:8px;border-radius:50%;background:#d9544f"></div>
  <div style="left:202px;top:0;width:48px;height:5px;background:#9ab4d4"></div>
  <div style="left:222px;top:2px;width:8px;height:4px;background:#2f5fa8;transform:skewX(-30deg)"></div>
  <div style="left:250px;top:0;width:122px;height:5px;background:#e9eff6;border-left:1px solid #7f93ad;border-right:1px solid #7f93ad"></div>
  <div style="left:262px;top:2.500px;width:12px;height:4px;background:#e8d77a"></div>
  <div style="left:372px;top:0;width:115px;height:5px;background:#edf2f8;border-right:1px solid #7f93ad"></div>
  <div style="left:384px;top:2.500px;width:11px;height:5px;border-radius:50% 50% 0 0;border:1px solid #a4c23c"></div>
  <div style="left:487px;top:0;width:48px;height:5px;background:#8facd2"></div>
  <div style="left:535px;top:0;width:115px;height:5px;background:#eef2f7;border-left:1px solid #7f93ad;border-right:1px solid #7f93ad"></div>
  <div style="left:543px;top:2px;width:16px;height:4px;background:#f0a43a"></div>
  <div style="left:650px;top:0;width:350px;height:5px;background:#a3b8d3"></div>
</div>

<!-- ============ MENUS ============ -->
<div id="menu1" class="menu" style="left:111px;top:18.5px;width:196px;height:483.700px"><div class="gut"></div>
<div class="it" style="top:1.8px"><span class="l">变换(T)</span><i class="ar"></i></div>
<div class="it" style="top:17.9px"><span class="l">排列(A)</span><i class="ar"></i></div>
<div class="sep" style="top:34.8px"></div>
<div class="it" style="top:40.0px"><span class="l">编组(G)</span><span class="r">Ctrl+G</span></div>
<div class="it dis" style="top:56.1px"><span class="l">取消编组(U)</span><span class="r">Shift+Ctrl+G</span></div>
<div class="it" style="top:72.2px"><span class="l">锁定(L)</span><i class="ar"></i></div>
<div class="it dis" style="top:88.3px"><span class="l">全部解锁(K)</span><span class="r">Alt+Ctrl+2</span></div>
<div class="it" style="top:104.4px"><span class="l">隐藏(H)</span><i class="ar"></i></div>
<div class="it dis" style="top:120.5px"><span class="l">显示全部</span><span class="r">Alt+Ctrl+3</span></div>
<div class="sep" style="top:137.4px"></div>
<div class="it" style="top:142.6px"><span class="l">扩展(X)...</span></div>
<div class="it dis" style="top:158.7px"><span class="l">扩展外观(E)</span></div>
<div class="it" style="top:174.8px"><span class="l">栅格化(Z)...</span></div>
<div class="it" style="top:190.9px"><span class="l">创建渐变网格(D)...</span></div>
<div class="it dis" style="top:207.0px"><span class="l">创建对象马赛克(J)...</span></div>
<div class="it" style="top:223.1px"><span class="l">拼合透明度(F)...</span></div>
<div class="sep" style="top:240.0px"></div>
<div class="it" style="top:245.2px"><span class="l">切片(S)</span><i class="ar"></i></div>
<div class="it" style="top:261.3px"><span class="l">创建裁切标记(C)</span></div>
<div class="sep" style="top:278.2px"></div>
<div class="hl" style="top:283.4px"></div>
<div class="it" style="top:283.4px"><span class="l">路径(P)</span><i class="ar"></i></div>
<div class="it" style="top:299.5px"><span class="l">图案(E)</span><i class="ar"></i></div>
<div class="it" style="top:315.6px"><span class="l">混合(B)</span><i class="ar"></i></div>
<div class="it" style="top:331.7px"><span class="l">封套扭曲(V)</span><i class="ar"></i></div>
<div class="it" style="top:347.8px"><span class="l">透视(P)</span><i class="ar"></i></div>
<div class="it" style="top:363.9px"><span class="l">实时上色(N)</span><i class="ar"></i></div>
<div class="it" style="top:380.0px"><span class="l">图像描摹</span><i class="ar"></i></div>
<div class="it" style="top:396.1px"><span class="l">文本绕排(W)</span><i class="ar"></i></div>
<div class="sep" style="top:413.0px"></div>
<div class="it" style="top:418.2px"><span class="l">剪切蒙版(M)</span><i class="ar"></i></div>
<div class="it" style="top:434.3px"><span class="l">复合路径(O)</span><i class="ar"></i></div>
<div class="it" style="top:450.4px"><span class="l">画板(A)</span><i class="ar"></i></div>
<div class="it" style="top:466.5px"><span class="l">图表(R)</span><i class="ar"></i></div>
</div>
<div id="menu2" class="menu" style="left:303px;top:299px;width:173.500px;height:190px"><div class="gut"></div>
<div class="it" style="top:2.3px"><span class="l">连接(J)</span><span class="r">Ctrl+J</span></div>
<div class="it" style="top:18.4px"><span class="l">平均(V)...</span><span class="r">Alt+Ctrl+J</span></div>
<div class="sep" style="top:35.4px"></div>
<div class="it" style="top:40.6px"><span class="l">轮廓化描边(U)</span></div>
<div class="it" style="top:56.7px"><span class="l">偏移路径(O)...</span></div>
<div class="sep" style="top:73.7px"></div>
<div class="it" style="top:78.9px"><span class="l">简化(M)...</span></div>
<div class="it" style="top:95.0px"><span class="l">添加锚点(A)</span></div>
<div class="it" style="top:111.2px"><span class="l">移去锚点(R)</span></div>
<div class="hl" style="top:127.3px"></div>
<div class="it" style="top:127.3px"><span class="l">分割下方对象(D)</span></div>
<div class="sep" style="top:144.3px"></div>
<div class="it" style="top:149.5px"><span class="l">分割为网格(S)...</span></div>
<div class="sep" style="top:166.5px"></div>
<div class="it" style="top:171.7px"><span class="l">清理(C)...</span></div>
</div>

</div>
</body>
</html>
